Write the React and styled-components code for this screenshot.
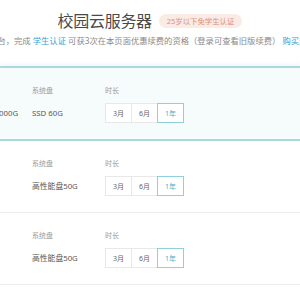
import React from 'react';
import styled, { createGlobalStyle } from 'styled-components';

const GlobalStyle = createGlobalStyle`
  body {
    margin: 0;
    background: #fff;
    font-family: "Noto Sans", "Noto Sans CJK SC", sans-serif;
    overflow: hidden;
  }
`;

const Page = styled.div`
  width: 300px;
  height: 300px;
  overflow: hidden;
  padding-top: 12px;
  box-sizing: border-box;
`;

const TitleRow = styled.div`
  display: flex;
  justify-content: center;
  align-items: center;
  gap: 7px;
  height: 18px;
`;

const Title = styled.h1`
  margin: 0;
  font-size: 16px;
  font-weight: 400;
  line-height: 18px;
  color: #4a4a4a;
  letter-spacing: -0.3px;
`;

const Badge = styled.span`
  background: #fbebe5;
  color: #d9917a;
  font-size: 7.4px;
  line-height: 14px;
  height: 14px;
  padding: 0 8px;
  border-radius: 7px;
  white-space: nowrap;
`;

const Notice = styled.div`
  display: flex;
  justify-content: center;
  margin-top: 6px;
  height: 10px;
  font-size: 8.3px;
  line-height: 10px;
  color: #8a8a8a;
  white-space: nowrap;
`;

const Link = styled.span`
  color: #33a3d6;
`;

const Card = styled.div`
  background: ${p => (p.active ? '#f6fbfc' : '#fff')};
  border-top: ${p => (p.active ? '2px solid #abd7df' : 'none')};
  border-bottom: ${p => (p.active ? '2px solid #abd7df' : '1px solid #ededed')};
  box-shadow: ${p => (p.active ? '0 0 6px rgba(120, 205, 220, 0.25)' : 'none')};
  padding: 18px 0 16px;
`;

const Cards = styled.div`
  margin-top: 20px;
`;

const Row = styled.div`
  display: flex;
  align-items: flex-start;
`;

const Lead = styled.div`
  width: 17px;
  margin-right: 15px;
  display: flex;
  justify-content: flex-end;
`;

const Column = styled.div`
  width: ${p => p.width || 'auto'};
  display: flex;
  flex-direction: column;
  flex-shrink: 0;
`;

const Label = styled.div`
  font-size: 7px;
  line-height: 10px;
  height: 10px;
  color: #9a9a9a;
  margin-bottom: 7px;
  white-space: nowrap;
`;

const Value = styled.div`
  font-size: 7.8px;
  line-height: 20px;
  height: 20px;
  color: #5a5a5a;
  white-space: nowrap;
`;

const Options = styled.div`
  display: flex;
  height: 20px;
`;

const Option = styled.div`
  width: 27px;
  height: 20px;
  box-sizing: border-box;
  margin-left: -1px;
  display: flex;
  align-items: center;
  justify-content: center;
  font-size: 7px;
  background: #fff;
  border: 1px solid ${p => (p.selected ? '#8fd0dc' : '#e8e8e8')};
  color: ${p => (p.selected ? '#45b0c9' : '#666')};
  position: relative;
  z-index: ${p => (p.selected ? 1 : 0)};
  &:first-child {
    margin-left: 0;
  }
`;

const cards = [
  { active: true, lead: { label: '月流量', value: '每月1000G' }, disk: 'SSD 60G' },
  { active: false, disk: '高性能盘50G' },
  { active: false, disk: '高性能盘50G' },
];

const durations = ['3月', '6月', '1年'];

export default function App() {
  return (
    <Page>
      <GlobalStyle />
      <TitleRow>
        <Title>校园云服务器</Title>
        <Badge>25岁以下免学生认证</Badge>
      </TitleRow>
      <Notice>
        <span>
          购1台，完成 <Link>学生认证</Link> 可获3次在本页面优惠续费的资格（登录可查看旧版续费） <Link>购买规则</Link>
        </span>
      </Notice>
      <Cards>
        {cards.map((card, i) => (
          <Card key={i} active={card.active}>
            <Row>
              <Lead>
                {card.lead && (
                  <Column width="38px">
                    <Label>{card.lead.label}</Label>
                    <Value>{card.lead.value}</Value>
                  </Column>
                )}
              </Lead>
              <Column width="73px">
                <Label>系统盘</Label>
                <Value>{card.disk}</Value>
              </Column>
              <Column>
                <Label>时长</Label>
                <Options>
                  {durations.map(d => (
                    <Option key={d} selected={d === '1年'}>{d}</Option>
                  ))}
                </Options>
              </Column>
            </Row>
          </Card>
        ))}
      </Cards>
    </Page>
  );
}
